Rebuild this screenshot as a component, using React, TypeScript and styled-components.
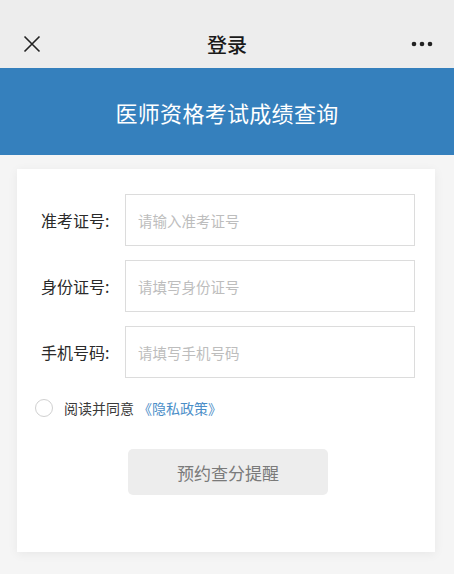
import React from 'react';
import styled, { createGlobalStyle } from 'styled-components';

const GlobalStyle = createGlobalStyle`
    html, body {
        margin: 0;
        padding: 0;
        background: #f5f5f5;
        font-family: "Noto Sans CJK SC", "Noto Sans", sans-serif;
    }
    * { box-sizing: border-box; }
`;

const Page = styled.div`
    width: 454px;
    min-height: 574px;
    background: #f5f5f5;
    overflow: hidden;
`;

const NavBar = styled.div`
    height: 68px;
    padding: 20px 18px 0 18px;
    background: #ededed;
    display: flex;
    align-items: center;
    justify-content: space-between;
`;

const NavTitle = styled.div`
    font-size: 20px;
    color: #1a1a1a;
    font-weight: 500;
`;

const NavIcon = styled.div`
    width: 28px;
    height: 28px;
    display: flex;
    align-items: center;
    justify-content: center;
`;

const Banner = styled.div`
    height: 87px;
    background: #3580bd;
    display: flex;
    align-items: center;
    justify-content: center;
    color: #fff;
    font-size: 22px;
    letter-spacing: 0.3px;
`;

const Card = styled.div`
    margin: 14px 19px 0 17px;
    background: #fff;
    box-shadow: 0 2px 10px rgba(0, 0, 0, 0.06);
    padding: 25px 20px 57px 24px;
`;

const Row = styled.div`
    display: flex;
    align-items: center;
    margin-bottom: 14px;
`;

const Label = styled.label`
    width: 84px;
    flex-shrink: 0;
    font-size: 16px;
    color: #2a2a2a;
`;

const Input = styled.input`
    flex: 1;
    height: 52px;
    border: 1px solid #dcdcdc;
    border-radius: 0;
    padding: 0 12px;
    font-size: 14.5px;
    font-family: inherit;
    color: #333;
    outline: none;
    &::placeholder {
        color: #bdbdbd;
    }
`;

const Agree = styled.div`
    display: flex;
    align-items: center;
    margin: 20px 0 0 -6px;
    font-size: 14px;
    color: #3a3a3a;
`;

const Circle = styled.span`
    width: 18px;
    height: 18px;
    border-radius: 50%;
    border: 1px solid #d0d0d0;
    margin-right: 11px;
`;

const Link = styled.span`
    color: #4b8ec8;
    margin-left: 4px;
`;

const SubmitButton = styled.button`
    display: block;
    margin: 31px auto 0 auto;
    width: 200px;
    height: 46px;
    border: none;
    border-radius: 5px;
    background: #ededed;
    color: #7a7a7a;
    font-size: 17px;
    font-family: inherit;
`;

const fields = [
    { label: '准考证号:', placeholder: '请输入准考证号' },
    { label: '身份证号:', placeholder: '请填写身份证号' },
    { label: '手机号码:', placeholder: '请填写手机号码' },
];

export default function App(): React.ReactElement {
    return (
        <Page>
            <GlobalStyle />
            <NavBar>
                <NavIcon>
                    <svg width="18" height="18" viewBox="0 0 18 18">
                        <path d="M1.5 1.5 L16.5 16.5 M16.5 1.5 L1.5 16.5" stroke="#222" strokeWidth="1.6" />
                    </svg>
                </NavIcon>
                <NavTitle>登录</NavTitle>
                <NavIcon>
                    <svg width="22" height="6" viewBox="0 0 22 6">
                        <circle cx="3" cy="3" r="2.3" fill="#222" />
                        <circle cx="11" cy="3" r="2.3" fill="#222" />
                        <circle cx="19" cy="3" r="2.3" fill="#222" />
                    </svg>
                </NavIcon>
            </NavBar>
            <Banner>医师资格考试成绩查询</Banner>
            <Card>
                {fields.map((f) => (
                    <Row key={f.label}>
                        <Label>{f.label}</Label>
                        <Input placeholder={f.placeholder} />
                    </Row>
                ))}
                <Agree>
                    <Circle />
                    阅读并同意
                    <Link>《隐私政策》</Link>
                </Agree>
                <SubmitButton>预约查分提醒</SubmitButton>
            </Card>
        </Page>
    );
}
